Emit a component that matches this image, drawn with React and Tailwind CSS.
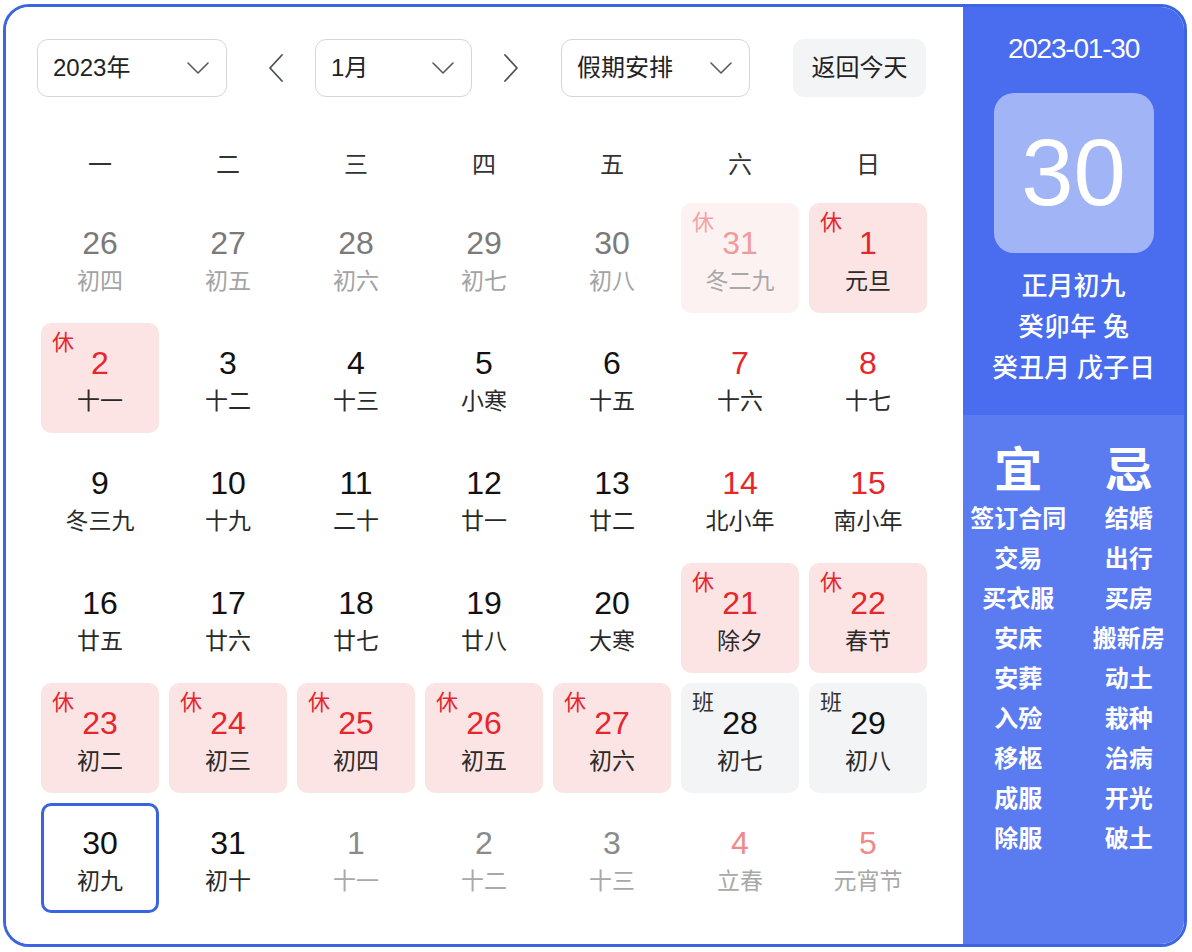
import React from 'react'

const FONT = { fontFamily: '"Liberation Sans", "Noto Sans CJK SC", sans-serif' }

// kind: prev | next | hol | holFaded | work | red | nextRed | today | normal
const rows = [
  [['26', '初四', 'prev'], ['27', '初五', 'prev'], ['28', '初六', 'prev'], ['29', '初七', 'prev'], ['30', '初八', 'prev'], ['31', '冬二九', 'holFaded'], ['1', '元旦', 'hol']],
  [['2', '十一', 'hol'], ['3', '十二'], ['4', '十三'], ['5', '小寒'], ['6', '十五'], ['7', '十六', 'red'], ['8', '十七', 'red']],
  [['9', '冬三九'], ['10', '十九'], ['11', '二十'], ['12', '廿一'], ['13', '廿二'], ['14', '北小年', 'red'], ['15', '南小年', 'red']],
  [['16', '廿五'], ['17', '廿六'], ['18', '廿七'], ['19', '廿八'], ['20', '大寒'], ['21', '除夕', 'hol'], ['22', '春节', 'hol']],
  [['23', '初二', 'hol'], ['24', '初三', 'hol'], ['25', '初四', 'hol'], ['26', '初五', 'hol'], ['27', '初六', 'hol'], ['28', '初七', 'work'], ['29', '初八', 'work']],
  [['30', '初九', 'today'], ['31', '初十'], ['1', '十一', 'next'], ['2', '十二', 'next'], ['3', '十三', 'next'], ['4', '立春', 'nextRed'], ['5', '元宵节', 'nextRed']],
]

const yi = ['签订合同', '交易', '买衣服', '安床', '安葬', '入殓', '移柩', '成服', '除服']
const ji = ['结婚', '出行', '买房', '搬新房', '动土', '栽种', '治病', '开光', '破土']

const Chevron = () => (
  <svg width="24" height="14" viewBox="0 0 24 14" fill="none">
    <path d="M2 2 L12 12 L22 2" stroke="#555a63" strokeWidth="1.6" strokeLinecap="round" strokeLinejoin="round" />
  </svg>
)

const Arrow = ({ dir }) => (
  <div className="w-[40px] h-[58px] flex items-center justify-center">
    <svg width="18" height="30" viewBox="0 0 18 30" fill="none">
      <path d={dir === 'left' ? 'M15 2 L3 15 L15 28' : 'M3 2 L15 15 L3 28'} stroke="#4b5058" strokeWidth="1.8" strokeLinecap="round" strokeLinejoin="round" />
    </svg>
  </div>
)

const Select = ({ label, width }) => (
  <div className={`h-[58px] ${width} border border-[#d3d6dc] rounded-[11px] flex items-center justify-between pl-[15px] pr-[16px] text-[24px] text-[#222]`}>
    <span>{label}</span>
    <Chevron />
  </div>
)

const Cell = ({ num, lunar, kind = 'normal' }) => {
  let box = 'bg-white'
  let numC = 'text-[#111]'
  let lunC = 'text-[#2a2a2a]'
  let tag = null
  if (kind === 'prev') { numC = 'text-[#7a7a7a]'; lunC = 'text-[#a3a3a3]' }
  if (kind === 'next') { numC = 'text-[#8a8a8a]'; lunC = 'text-[#a8a8a8]' }
  if (kind === 'nextRed') { numC = 'text-[#f08a8a]'; lunC = 'text-[#a8a8a8]' }
  if (kind === 'red') { numC = 'text-[#e5262b]' }
  if (kind === 'hol') { box = 'bg-[#fde4e4]'; numC = 'text-[#e5262b]'; tag = <span className="absolute left-[11px] top-[9px] text-[22px] leading-none text-[#e5262b]">休</span> }
  if (kind === 'holFaded') { box = 'bg-[#fdf2f2]'; numC = 'text-[#f19a9a]'; lunC = 'text-[#a8a8a8]'; tag = <span className="absolute left-[11px] top-[9px] text-[22px] leading-none text-[#f3a3a3]">休</span> }
  if (kind === 'work') { box = 'bg-[#f3f4f6]'; tag = <span className="absolute left-[11px] top-[9px] text-[22px] leading-none text-[#333]">班</span> }
  if (kind === 'today') { box = 'bg-white border-[3px] border-[#3a63df]' }
  return (
    <div className={`relative h-[110px] rounded-[10px] flex flex-col items-center ${box} ${kind === 'today' ? 'pt-[19px]' : 'pt-[22px]'}`}>
      {tag}
      <div className={`text-[32px] leading-[36px] ${numC}`}>{num}</div>
      <div className={`mt-[5px] text-[23px] leading-[30px] ${lunC}`}>{lunar}</div>
    </div>
  )
}

export default function App() {
  return (
    <div className="w-[1192px] h-[952px] bg-white pl-[3px] pt-[4px]" style={FONT}>
      <div className="w-[1184px] h-[943px] border-[3px] border-[#3d65e3] rounded-[26px] overflow-hidden flex">
        <div className="flex-1 bg-white pl-[31px] pt-[32px]">
          <div className="flex items-center">
            <Select label="2023年" width="w-[190px]" />
            <div className="ml-[29px]"><Arrow dir="left" /></div>
            <div className="ml-[19px]"><Select label="1月" width="w-[157px]" /></div>
            <div className="ml-[19px]"><Arrow dir="right" /></div>
            <div className="ml-[30px]"><Select label="假期安排" width="w-[189px]" /></div>
            <div className="ml-[43px] h-[58px] w-[133px] bg-[#f3f4f6] rounded-[11px] flex items-center justify-center text-[24px] text-[#222]">返回今天</div>
          </div>

          <div className="ml-[4px] w-[886px] mt-[48px] h-[40px] grid grid-cols-7 gap-x-[10px] text-[24px] text-[#333]">
            {['一', '二', '三', '四', '五', '六', '日'].map((d) => (
              <div key={d} className="flex items-center justify-center">{d}</div>
            ))}
          </div>

          <div className="ml-[4px] w-[886px] mt-[18px] grid grid-cols-7 gap-[10px]">
            {rows.flat().map(([n, l, k], i) => (
              <Cell key={i} num={n} lunar={l} kind={k} />
            ))}
          </div>
        </div>

        <div className="w-[221px] flex flex-col text-white">
          <div className="h-[408px] bg-[#4a6cef] flex flex-col items-center pt-[26px]">
            <div className="text-[28px] leading-[32px] tracking-[-1.2px]">2023-01-30</div>
            <div className="mt-[28px] w-[160px] h-[160px] rounded-[20px] bg-[#a1b5f6] flex items-center justify-center text-[94px] leading-none">30</div>
            <div className="mt-[13px] flex flex-col items-center text-[26px] leading-[41px] font-medium">
              <div>正月初九</div>
              <div>癸卯年 兔</div>
              <div>癸丑月 戊子日</div>
            </div>
          </div>
          <div className="flex-1 bg-[#5b7cf0] pt-[28px] grid grid-cols-2 content-start">
            <div className="flex flex-col items-center">
              <div className="text-[48px] leading-[56px] font-bold">宜</div>
              {yi.map((t) => (
                <div key={t} className="text-[24px] leading-[40px] font-bold whitespace-nowrap">{t}</div>
              ))}
            </div>
            <div className="flex flex-col items-center">
              <div className="text-[48px] leading-[56px] font-bold">忌</div>
              {ji.map((t) => (
                <div key={t} className="text-[24px] leading-[40px] font-bold whitespace-nowrap">{t}</div>
              ))}
            </div>
          </div>
        </div>
      </div>
    </div>
  )
}
